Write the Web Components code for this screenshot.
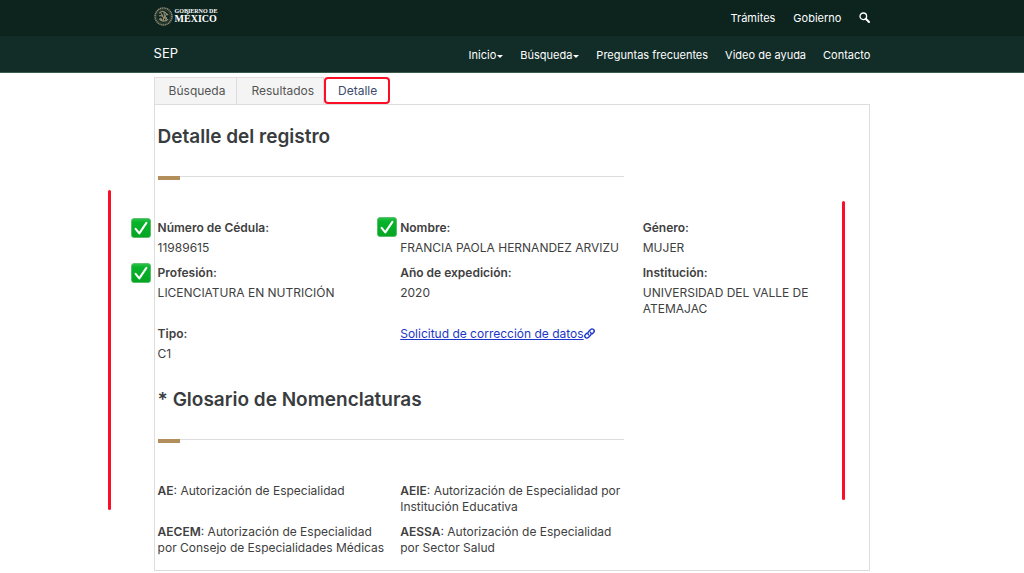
<!DOCTYPE html>
<html lang="es">
<head>
<meta charset="utf-8">
<meta name="viewport" content="width=device-width, initial-scale=1">
<title>Detalle del registro</title>
<style>
  body { margin: 0; background: #fff; color: #404041; font: 12px/16px Inter, sans-serif; }
</style>
</head>
<body>
<registro-page></registro-page>

<script>
const define = (name, html) => {
  const template = document.createElement('template');
  template.innerHTML = html;
  customElements.define(name, class extends HTMLElement {
    constructor() {
      super();
      this.attachShadow({ mode: 'open' }).append(template.content.cloneNode(true));
    }
  });
};

define('check-badge', `
  <style>
    :host { display: block; width: 20px; height: 20px; }
    svg { display: block; }
  </style>
  <svg width="20" height="20" viewBox="0 0 20 20" role="img" aria-label="Verificado">
    <defs><linearGradient id="g" x1="0" y1="0" x2="0" y2="1"><stop offset="0" stop-color="#2fc24c"/><stop offset=".2" stop-color="#07b32b"/><stop offset="1" stop-color="#04a522"/></linearGradient></defs>
    <rect x=".5" y=".5" width="19" height="19" rx="2.5" fill="url(#g)" stroke="#4cb862" stroke-width=".8"/>
    <path d="M4.6 10.8 8.3 15.4 15.4 4.8" fill="none" stroke="#fff" stroke-width="2.1" stroke-linecap="round" stroke-linejoin="round"/>
  </svg>`);

define('gob-logo', `
  <style>
    :host { display: block; }
    a { display: flex; align-items: center; gap: 2px; color: #fff; text-decoration: none; font-family: "Liberation Serif", serif; font-weight: bold; }
    svg { display: block; }
    .words { display: flex; flex-direction: column; }
    .small { font-size: 6px; line-height: 6px; }
    .big { font-size: 10px; line-height: 10px; }
  </style>
  <a href="#" aria-label="Gobierno de México">
    <svg width="19" height="19" viewBox="0 0 18 18" fill="none" stroke="#8f8b72">
      <circle cx="9" cy="9" r="8" stroke-width="1.5" stroke-dasharray="1.2 .5"/>
      <circle cx="9" cy="9" r="6.5" stroke-width=".5" opacity=".6"/>
      <path d="M5 6.2c1.2-2 3.4-2.5 5-1.5s2.3 2.5 3.5 3M4.5 8.5c2-.8 3.5.2 4.2 1.2s2.3 1 3.8.3M6.5 5.5l2 3.5M9.5 5l.5 5M11.8 6l-1.3 4M4.8 11c1.7 2.7 6 3.600 8.600.4M6 10.200l2 2.500M9 10.500v3.300M12 10.500l-1.500 2.500" stroke-width="1.1"/>
    </svg>
    <span class="words"><span class="small">GOBIERNO DE</span><span class="big">MÉXICO</span></span>
  </a>`);

define('nav-link', `
  <style>
    :host { display: block; }
    a { display: flex; align-items: center; gap: 1px; color: #fff; text-decoration: none; font-size: 11px; line-height: 16px; }
    i { display: none; border: 3px solid transparent; border-top: 3px solid #fff; border-bottom: 0; margin-top: 2px; }
    :host([menu]) i { display: block; }
  </style>
  <a href="#"><slot></slot><i></i></a>`);

define('site-header', `
  <style>
    :host { display: block; color: #fff; }
    .bar { background: #0c231e; }
    .sub { background: #122d28; border-bottom: 1px solid #395c4d; }
    .inner { width: 70%; margin: 0 auto; display: flex; justify-content: space-between; align-items: center; min-height: 36px; }
    nav { display: flex; align-items: center; gap: 18px; }
    .sub nav { padding-top: 2px; gap: 17px; }
    .site { color: #fff; text-decoration: none; font-size: 13px; line-height: 16px; padding-bottom: 3px; }
    button { border: 0; padding: 0 0 2px; background: none; }
    svg { display: block; }
    gob-logo { padding-bottom: 4px; }
  </style>
  <header>
    <div class="bar"><div class="inner">
      <gob-logo></gob-logo>
      <nav><nav-link>Trámites</nav-link><nav-link>Gobierno</nav-link>
        <button type="button" aria-label="Buscar"><svg width="11" height="11" viewBox="0 0 11 11" fill="none" stroke="#fff"><circle cx="4.3" cy="4.3" r="3.3" stroke-width="1.3"/><path d="M6.8 6.8 10 10" stroke-width="2" stroke-linecap="round"/></svg></button>
      </nav>
    </div></div>
    <div class="sub"><div class="inner">
      <a class="site" href="#">SEP</a>
      <nav><nav-link menu>Inicio</nav-link><nav-link menu>Búsqueda</nav-link><nav-link>Preguntas frecuentes</nav-link><nav-link>Video de ayuda</nav-link><nav-link>Contacto</nav-link></nav>
    </div></div>
  </header>`);

define('tab-item', `
  <style>
    :host { display: block; }
    button { box-sizing: border-box; height: 27px; padding: 0 9px 0 14px; border: 1px solid #ddd; border-width: 1px 1px 0 0; background: #f4f4f4; color: #545454; font: 12px/16px Inter, sans-serif; }
    :host([first]) button { border-left-width: 1px; padding-right: 11px; }
    :host([selected]) button { background: #fff; color: #3c4c6c; border: 2px solid #fb0f26; border-radius: 4px; padding: 0 11px 0 12px; }
  </style>
  <button type="button"><slot></slot></button>`);

define('section-title', `
  <style>
    :host { display: block; }
    h2 { margin: 0; font-size: 19px; line-height: 24px; font-weight: 600; color: #393c3e; }
    .rule { width: calc(66% - 3px); height: 1px; background: #ddd; margin: 27px 0 43px; }
    .rule::before { content: ""; display: block; width: 22px; height: 4px; background: #b38e5d; }
  </style>
  <h2><slot></slot></h2><div class="rule"></div>`);

define('data-field', `
  <style>
    :host { display: block; position: relative; }
    strong { display: block; font-weight: 600; }
    p { margin: 4px 0 0; }
    ::slotted(check-badge) { position: absolute; left: -27px; top: -2px; }
    :host([near]) ::slotted(check-badge) { left: -23px; top: -3px; }
  </style>
  <slot name="badge"></slot><strong><slot name="label"></slot></strong><p><slot></slot></p>`);

define('glossary-term', `
  <style>:host { display: block; margin-right: -5px; } strong { font-weight: 600; }</style>
  <strong><slot name="term"></slot></strong>: <slot></slot>`);

define('registro-page', `
  <style>
    :host { display: block; }
    main { width: 70%; margin: 4px auto 0; }
    .tabs { display: flex; }
    .panel { position: relative; border: 1px solid #ddd; padding: 20px 1px 14px 3px; }
    .grid { display: grid; grid-template-columns: repeat(3, 1fr); gap: 9px 17px; }
    .fields { margin-bottom: 26px; }
    .correct { color: #1d36c8; display: inline-flex; align-items: center; text-decoration: none; }
    .correct span { text-decoration: underline; }
    .correct svg { margin-bottom: 2px; }
    .mark { position: absolute; width: 3px; border-radius: 2px; background: #fb0f26; }
    .left { left: -47px; top: 85px; height: 320px; }
    .right { right: 24px; top: 96px; height: 299px; }
  </style>
  <site-header></site-header>
  <main>
    <div class="tabs"><tab-item first>Búsqueda</tab-item><tab-item>Resultados</tab-item><tab-item selected>Detalle</tab-item></div>
    <section class="panel">
      <section-title>Detalle del registro</section-title>
      <div class="grid fields">
        <data-field><check-badge slot="badge"></check-badge><span slot="label">Número de Cédula:</span>11989615</data-field>
        <data-field near><check-badge slot="badge"></check-badge><span slot="label">Nombre:</span>FRANCIA PAOLA HERNANDEZ ARVIZU</data-field>
        <data-field><span slot="label">Género:</span>MUJER</data-field>
        <data-field><check-badge slot="badge"></check-badge><span slot="label">Profesión:</span>LICENCIATURA EN NUTRICIÓN</data-field>
        <data-field><span slot="label">Año de expedición:</span>2020</data-field>
        <data-field><span slot="label">Institución:</span>UNIVERSIDAD DEL VALLE DE ATEMAJAC</data-field>
        <data-field><span slot="label">Tipo:</span>C1</data-field>
        <div><a class="correct" href="#"><span>Solicitud de corrección de datos</span><svg width="11" height="11" viewBox="0 0 11 11" fill="none" stroke="#1d36c8" stroke-width="1.4" stroke-linecap="round"><path d="M4.600 6.700C3.500 5.600 3.700 4.500 4.500 3.700L6.400 1.700C7.300.8 8.600.7 9.500 1.500s.8 2.200 0 3.100L8.400 5.700M6.400 4.300c1.100 1.100.9 2.200.1 3L4.600 9.300C3.700 10.200 2.400 10.300 1.500 9.500s-.8-2.200 0-3.100L2.600 5.300"/></svg></a></div>
      </div>
      <section-title>* Glosario de Nomenclaturas</section-title>
      <div class="grid">
        <glossary-term><span slot="term">AE</span>Autorización de Especialidad</glossary-term>
        <glossary-term><span slot="term">AEIE</span>Autorización de Especialidad por Institución Educativa</glossary-term>
        <span></span>
        <glossary-term><span slot="term">AECEM</span>Autorización de Especialidad por Consejo de Especialidades Médicas</glossary-term>
        <glossary-term><span slot="term">AESSA</span>Autorización de Especialidad por Sector Salud</glossary-term>
      </div>
      <div class="mark left"></div><div class="mark right"></div>
    </section>
  </main>`);
</script>
</body>
</html>
